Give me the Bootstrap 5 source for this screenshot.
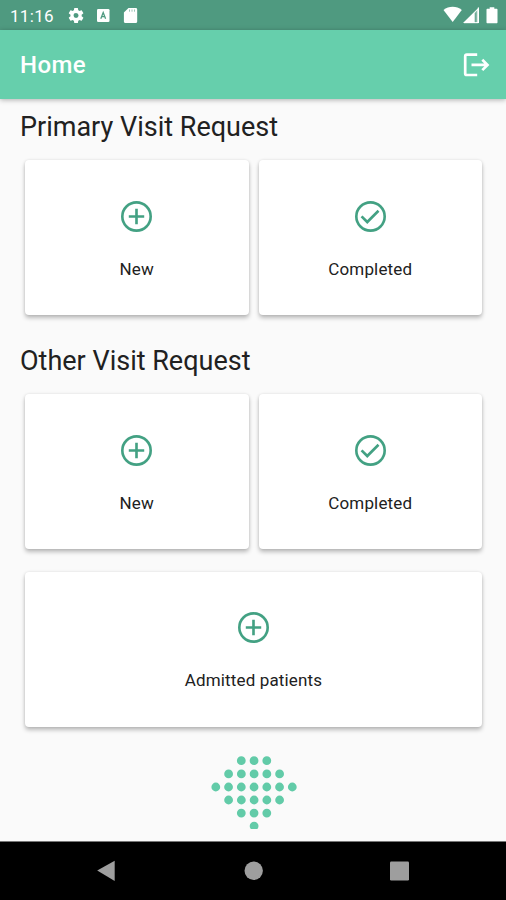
<!DOCTYPE html>
<html lang="en">
<head>
<meta charset="utf-8">
<meta name="viewport" content="width=device-width, initial-scale=1">
<title>Home</title>
<link href="https://cdn.jsdelivr.net/npm/bootstrap@5.3.0/dist/css/bootstrap.min.css" rel="stylesheet">
<style>
  body { font-family: Roboto, "Liberation Sans", sans-serif; background: #fafafa; color: #212121; }
  .screen { height: 900px; }
  .status-bar { height: 30px; background: #4f9a80; padding: 0 8px 0 10px; font-size: 17px; line-height: 32px; letter-spacing: .3px; }
  .app-bar { height: 69px; background: #66cfac; padding: 0 16px 0 20px; box-shadow: 0 1px 5px rgba(0,0,0,.3); }
  .app-title { font-size: 24px; font-weight: 500; line-height: 30px; letter-spacing: .4px; padding-top: 1px; }
  .content { padding: 0 24px 0 25px; }
  .section-title { font-size: 27px; font-weight: 400; line-height: 32px; letter-spacing: 0; margin: 0 0 0 -5px; }
  .title-first { padding: 12px 0 17px; }
  .title-next { padding: 30px 0 17px; }
  .tile-grid { gap: 10px; }
  .tile { height: 155px; border: 0; border-radius: 4px; box-shadow: 0 3px 4px rgba(0,0,0,.25), 0 0 3px rgba(0,0,0,.1); padding-top: 37.500px; }
  .tile svg { width: 37px; height: 37px; fill: none; stroke: #43a183; stroke-width: 1.700px; }
  .tile-label { font-size: 17px; line-height: 24px; letter-spacing: .15px; margin-top: 22.500px; }
  .tile-wide { margin-top: 23px; padding-top: 37px; }
  .tile-wide .tile-label { margin-top: 22px; }
  .brand-dots { margin-top: 28px; }
  .nav-keys { height: 59px; background: #000; border-top: 1px solid #777; padding: 0 96px; }
</style>
</head>
<body>
<svg class="d-none" xmlns="http://www.w3.org/2000/svg">
  <symbol id="add" viewBox="0 0 24 24"><circle cx="12" cy="12" r="9.200"/><path d="M12 7v10M7 12h10"/></symbol>
  <symbol id="done" viewBox="0 0 24 24"><circle cx="12" cy="12" r="9.200"/><path d="M6.200 11.900l3.700 3.700 7.300-7.300"/></symbol>
</svg>
<div class="screen d-flex flex-column overflow-hidden">
  <div class="status-bar d-flex justify-content-between text-white">
    <div class="d-flex">
      <span>11:16</span>
      <svg width="90" height="30" viewBox="54 0 90 30" fill="#fff" aria-hidden="true">
        <path transform="translate(66.700 6.100) scale(.78)" d="M19.140 12.940c.04-.3.060-.61.060-.94s-.02-.64-.07-.94l2.030-1.580a.49.490 0 0 0 .12-.61l-1.920-3.320a.49.490 0 0 0-.59-.22l-2.390.96a7 7 0 0 0-1.620-.94l-.36-2.540A.48.480 0 0 0 13.920 2.400h-3.840a.47.470 0 0 0-.47.410l-.36 2.540a7.400 7.400 0 0 0-1.620.94l-2.390-.96a.47.470 0 0 0-.59.220L2.740 8.870a.47.470 0 0 0 .12.610l2.030 1.580a6 6 0 0 0 0 1.880l-2.030 1.580a.49.490 0 0 0-.12.610l1.920 3.320c.12.220.37.290.59.220l2.390-.96c.5.380 1.030.7 1.620.94l.36 2.540c.05.240.24.410.48.410h3.840c.24 0 .44-.17.470-.41l.36-2.540a7 7 0 0 0 1.620-.94l2.390.96c.22.080.47 0 .59-.22l1.920-3.320a.47.470 0 0 0-.12-.61zM12 15.200a3.200 3.200 0 1 1 0-6.400 3.200 3.200 0 0 1 0 6.400z"/>
        <rect x="97" y="9" width="12.500" height="13" rx="1.300"/>
        <path d="M100.800 18.800l2.400-6.200 2.400 6.200M101.800 16.700h2.800" fill="none" stroke="#4f9a80" stroke-width="1.300"/>
        <path d="M128.500 8h7.200c.9 0 1.500.6 1.500 1.500v12c0 .9-.6 1.500-1.500 1.500h-10.300c-.9 0-1.500-.6-1.500-1.500v-9z"/>
        <path d="M129.500 9.500v2.200M132 9.500v2.200M134.500 9.500v2.200" stroke="#4f9a80" stroke-width=".8" opacity=".7"/>
      </svg>
    </div>
    <svg width="58" height="30" viewBox="440 0 58 30" fill="#fff" aria-hidden="true">
      <path d="M443.500 10c5.200-4.300 13.200-4.300 18.300 0l-9.100 12z"/>
      <path d="M463 23l16-15.800V23h-2.800V12.500l-1 1V23z"/>
      <path d="M463.500 22.800L478.500 8v14.800z" opacity=".35"/>
      <path d="M474.600 13v9.200h2.800V10z" fill="#4f9a80" opacity=".65"/>
      <path d="M478.300 7.500v15.200H464" fill="none" stroke="#fff" stroke-width="1"/>
      <path d="M489.700 7.200h4.600v1.600h2.200c.6 0 1 .4 1 1v12.400c0 .6-.4 1-1 1h-9c-.6 0-1-.4-1-1V9.800c0-.6.4-1 1-1h2.200z"/>
    </svg>
  </div>
  <header class="app-bar d-flex justify-content-between align-items-center text-white">
    <h1 class="app-title mb-0">Home</h1>
    <svg width="28" height="28" viewBox="463 51 28 28" fill="none" stroke="#fff" stroke-width="2.700" role="img" aria-label="Log out">
      <path d="M478.200 54.600h-10.400c-1 0-1.600.6-1.600 1.600v17.200c0 1 .6 1.600 1.600 1.600h10.400M472.500 64.900h15.800M483.300 59.700l5.200 5.200-5.200 5.200"/>
    </svg>
  </header>
  <main class="content flex-grow-1">
    <h2 class="section-title title-first">Primary Visit Request</h2>
    <div class="tile-grid d-flex">
      <div class="tile card flex-fill w-50 align-items-center"><svg><use href="#add"/></svg><div class="tile-label">New</div></div>
      <div class="tile card flex-fill w-50 align-items-center"><svg><use href="#done"/></svg><div class="tile-label">Completed</div></div>
    </div>
    <h2 class="section-title title-next">Other Visit Request</h2>
    <div class="tile-grid d-flex">
      <div class="tile card flex-fill w-50 align-items-center"><svg><use href="#add"/></svg><div class="tile-label">New</div></div>
      <div class="tile card flex-fill w-50 align-items-center"><svg><use href="#done"/></svg><div class="tile-label">Completed</div></div>
    </div>
    <div class="tile tile-wide card align-items-center"><svg><use href="#add"/></svg><div class="tile-label">Admitted patients</div></div>
    <svg class="brand-dots d-block mx-auto" width="88" height="74" viewBox="209.700 755 88 74" fill="none" stroke="#62cba8" stroke-width="8.800" stroke-linecap="round" stroke-dasharray="0 12.750" aria-hidden="true">
      <path d="M241 760.700h25.600"/>
      <path d="M228.300 773.900h51.100"/>
      <path d="M215.500 787h76.600"/>
      <path d="M228.300 800h51.100"/>
      <path d="M241 813.100h25.600"/>
      <path d="M253.800 826.100h.1"/>
    </svg>
  </main>
  <nav class="nav-keys d-flex justify-content-between align-items-center">
    <svg width="20" height="22" viewBox="0 0 20 22" fill="#9e9e9e" role="img" aria-label="Back"><path d="M1.200 10.500L18.700.700v20.200z"/></svg>
    <svg width="20" height="22" viewBox="0 0 20 22" fill="#9e9e9e" role="img" aria-label="Home"><circle cx="10.700" cy="10.800" r="9.200"/></svg>
    <svg width="20" height="22" viewBox="0 0 20 22" fill="#9e9e9e" role="img" aria-label="Recent apps"><rect x="0" y="1.500" width="19" height="19" rx="1.200"/></svg>
  </nav>
</div>
<script src="https://cdn.jsdelivr.net/npm/bootstrap@5.3.0/dist/js/bootstrap.bundle.min.js"></script>
</body>
</html>
